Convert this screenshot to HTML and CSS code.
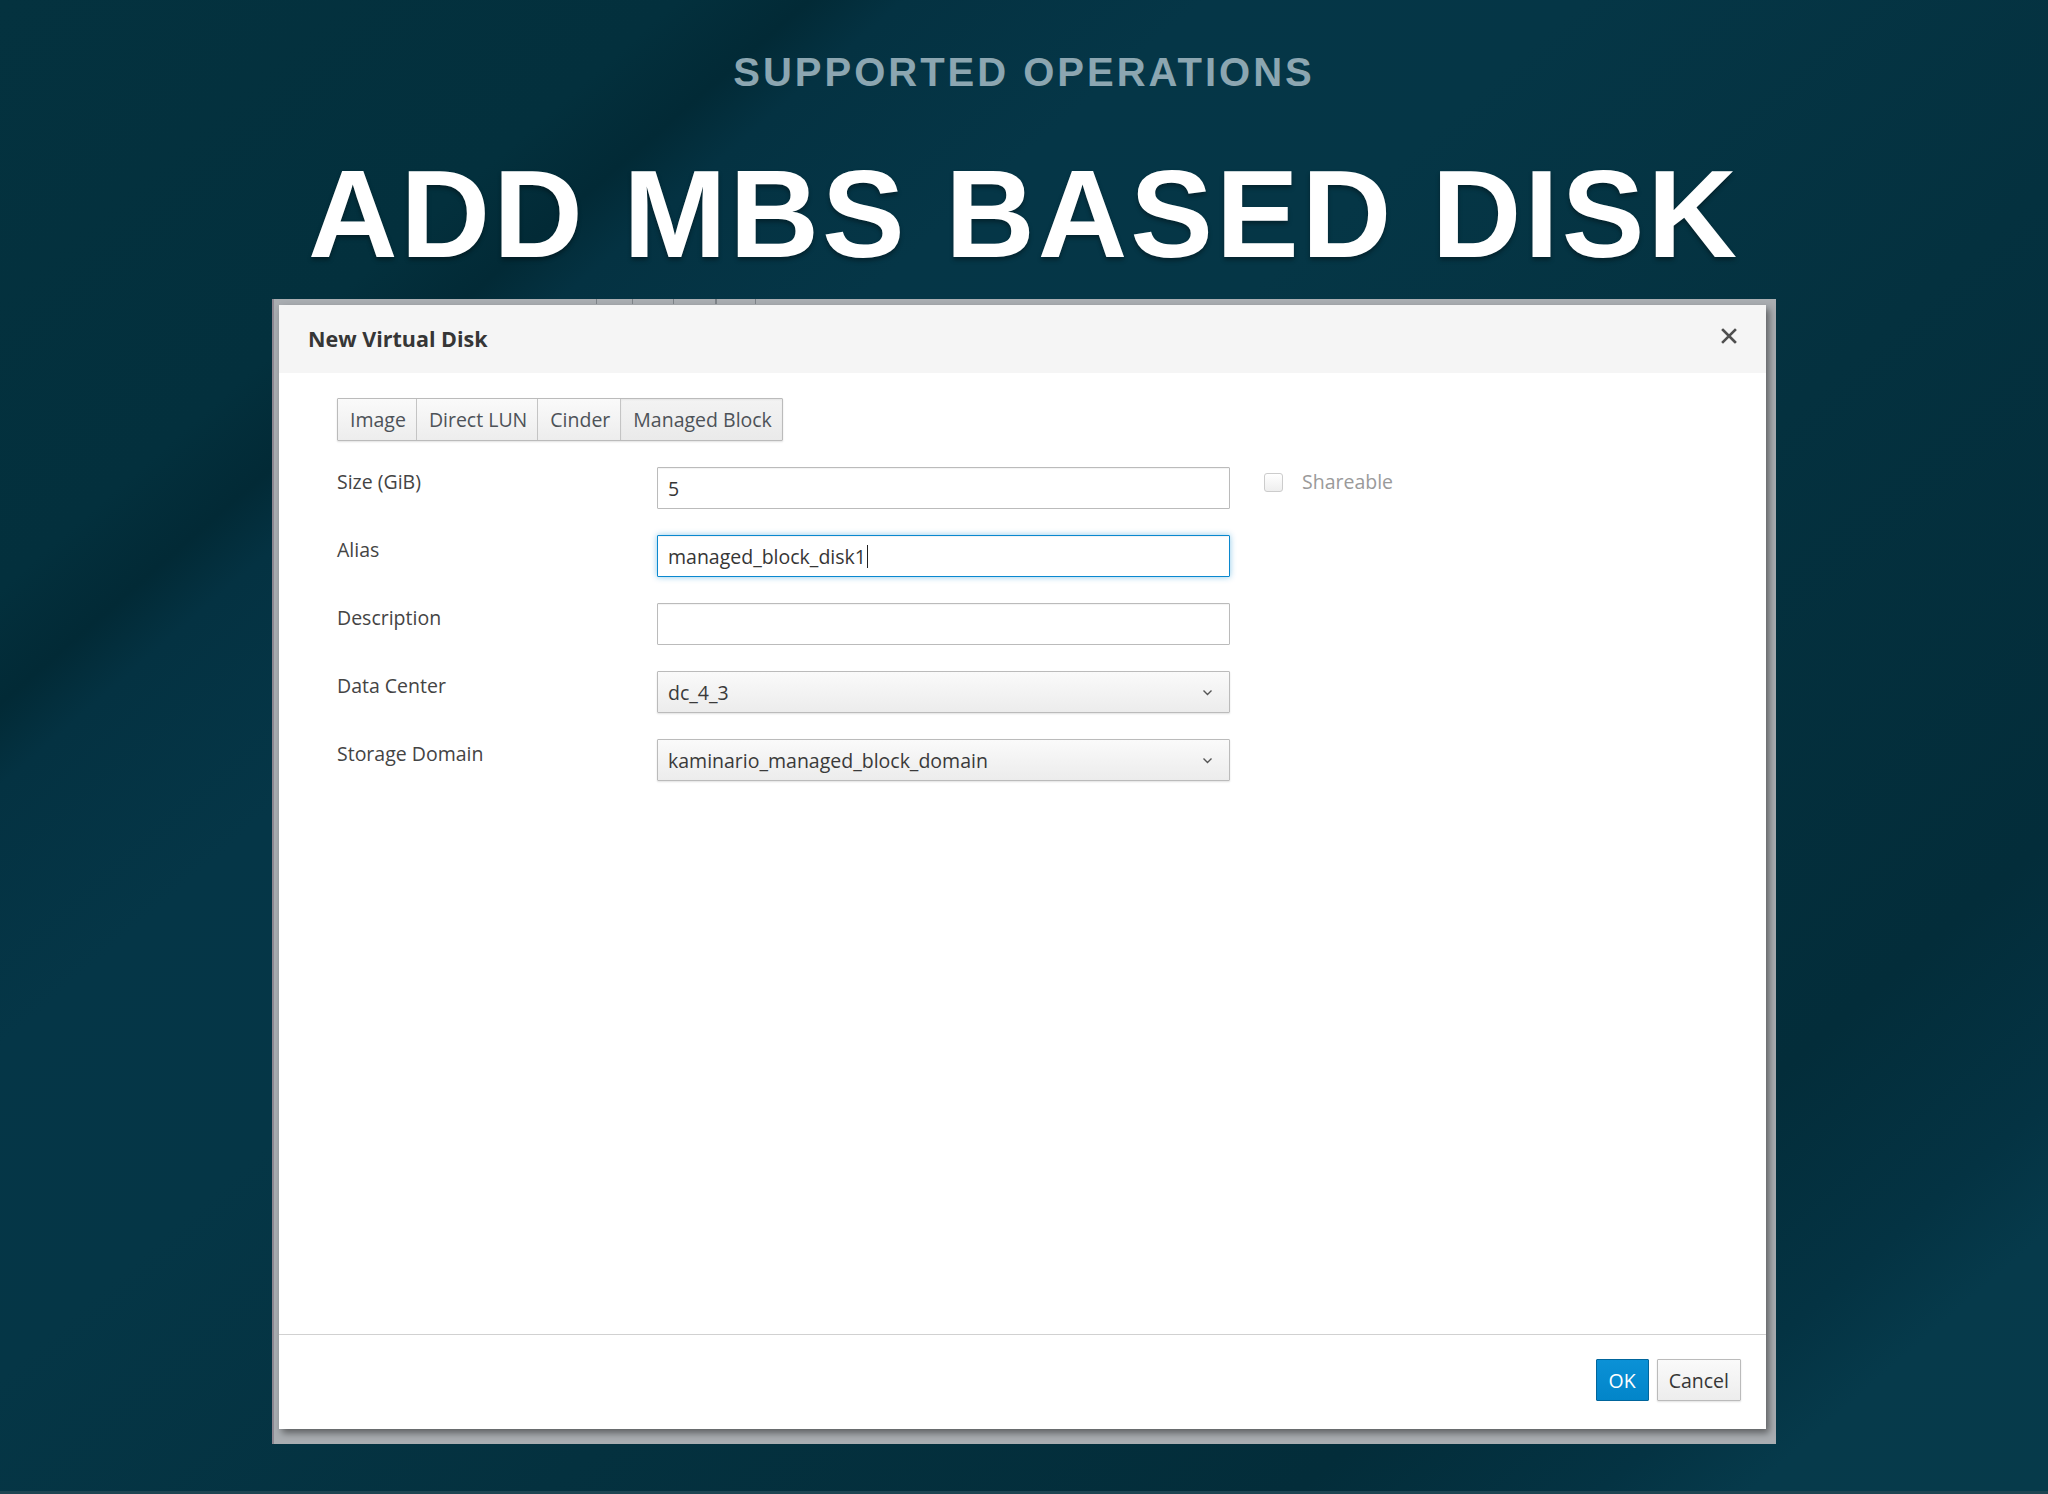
FILE: index.html
```html
<!DOCTYPE html>
<html lang="en">
<head>
<meta charset="utf-8">
<title>Add MBS based disk</title>
<link rel="stylesheet" href="styles.css">
</head>
<body>
<div class="slide">
  <p class="kicker">SUPPORTED OPERATIONS</p>
  <h1 class="headline">ADD MBS BASED DISK</h1>
  <div class="backdrop">
    <div class="modal">
      <div class="modal-header">
        <h4 class="modal-title">New Virtual Disk</h4>
        <span class="close" aria-label="Close">
          <svg width="16" height="16" viewBox="0 0 16 16"><path d="M2 2L14 14M14 2L2 14" stroke="#4f4f4f" stroke-width="2.6" stroke-linecap="square" fill="none"/></svg>
        </span>
      </div>
      <div class="modal-body">
        <div class="tabs">
          <span class="tab">Image</span>
          <span class="tab">Direct LUN</span>
          <span class="tab">Cinder</span>
          <span class="tab active">Managed Block</span>
        </div>
        <div class="form">
          <label class="label">Size (GiB)</label>
          <div class="control">5</div>
          <div class="extra"><span class="checkbox"></span><span class="extra-text">Shareable</span></div>

          <label class="label">Alias</label>
          <div class="control focused">managed_block_disk1<span class="caret"></span></div>
          <div></div>

          <label class="label">Description</label>
          <div class="control"></div>
          <div></div>

          <label class="label">Data Center</label>
          <div class="control select"><span>dc_4_3</span><svg class="chev" width="11" height="7" viewBox="0 0 11 7"><path d="M1.5 1.5l4 4 4-4" stroke="#555" stroke-width="1.4" fill="none"/></svg></div>
          <div></div>

          <label class="label">Storage Domain</label>
          <div class="control select"><span>kaminario_managed_block_domain</span><svg class="chev" width="11" height="7" viewBox="0 0 11 7"><path d="M1.5 1.5l4 4 4-4" stroke="#555" stroke-width="1.4" fill="none"/></svg></div>
          <div></div>
        </div>
      </div>
      <div class="modal-footer">
        <span class="btn btn-primary">OK</span>
        <span class="btn btn-default">Cancel</span>
      </div>
    </div>
  </div>
</div>
</body>
</html>
```
FILE: styles.css
```css
html, body {
  margin: 0;
  padding: 0;
}
body {
  width: 2048px;
  height: 1494px;
  overflow: hidden;
  background:
    linear-gradient(to top, #1d4552 0, #1d4552 3px, transparent 3px),
    linear-gradient(139deg,
      #04323f 0%, #03303d 18%, #022a36 21.5%, #043242 24%, #053647 32%,
      #053646 42%, #04313f 60%, #032d3a 80%, #043343 88%, #063a4b 92%, #063a4a 100%);
  font-family: "Open Sans", "Liberation Sans", sans-serif;
}
.slide {
  display: flex;
  flex-direction: column;
  align-items: center;
  padding-top: 52px;
}
.kicker {
  margin: 0;
  font-family: "Liberation Sans", Arial, sans-serif;
  font-weight: 700;
  font-size: 40px;
  line-height: 40px;
  letter-spacing: 3px;
  color: #8ca6b1;
}
.headline {
  margin: 60px 0 0;
  font-family: "Liberation Sans", Arial, sans-serif;
  font-weight: 700;
  font-size: 124px;
  line-height: 124px;
  letter-spacing: 3px;
  color: #ffffff;
  text-shadow: 0 3px 4px rgba(0, 0, 0, 0.35);
}
.backdrop {
  position: relative;
  margin-top: 23px;
  width: 1504px;
  height: 1145px;
  box-sizing: border-box;
  padding: 6px 10px 15px 5px;
  background: #a9adb1;
  border-left: 2px solid #8c8791;
  display: flex;
}
.backdrop::before {
  content: "";
  position: absolute;
  left: 322px;
  top: 0;
  width: 158px;
  height: 5px;
  border-left: 1px solid #7d8287;
  border-right: 1px solid #7d8287;
  background: linear-gradient(90deg, transparent 22%, #7d8287 22%, #7d8287 23%, transparent 23%, transparent 48%, #7d8287 48%, #7d8287 49%, transparent 49%, transparent 75%, #7d8287 75%, #7d8287 76%, transparent 76%);
}
.modal {
  flex: 1;
  display: flex;
  flex-direction: column;
  background: #ffffff;
  box-shadow: 3px 4px 7px rgba(0, 0, 0, 0.45);
}
.modal-header {
  height: 68px;
  flex: none;
  background: #f5f5f5;
  display: flex;
  align-items: center;
  justify-content: space-between;
  padding: 0 29px 0 29px;
}
.modal-title {
  margin: 0;
  font-size: 21.5px;
  font-weight: 700;
  color: #363636;
  line-height: 28px;
}
.close {
  display: flex;
  width: 16px;
  height: 16px;
  position: relative;
  top: -3px;
}
.modal-body {
  flex: 1;
  padding: 25px 58px 0;
}
.tabs {
  display: inline-flex;
  height: 43px;
  box-sizing: border-box;
  border: 1px solid #bbbbbb;
  border-radius: 1px;
  background: linear-gradient(#fafafa, #ededed);
  box-shadow: 0 1px 2px rgba(0, 0, 0, 0.12);
}
.tab {
  display: flex;
  align-items: center;
  padding: 0 10px 0 12px;
  font-size: 19.5px;
  color: #4d5258;
  border-left: 1px solid #c4c4c4;
}
.tab:first-child {
  border-left: none;
}
.tab.active {
  background: linear-gradient(#f3f3f3, #eaeaea);
  box-shadow: inset 0 1px 2px rgba(0, 0, 0, 0.06);
}
.form {
  margin-top: 26px;
  display: grid;
  grid-template-columns: 320px 573px auto;
  grid-auto-rows: 42px;
  row-gap: 26px;
}
.label {
  padding-top: 1px;
  font-size: 19.5px;
  line-height: 28px;
  color: #444444;
}
.control {
  height: 42px;
  box-sizing: border-box;
  border: 1px solid #bbbbbb;
  border-radius: 1px;
  box-shadow: inset 0 1px 1px rgba(0, 0, 0, 0.05);
  padding: 0 10px;
  display: flex;
  align-items: center;
  font-size: 19.5px;
  color: #363636;
  background: #ffffff;
}
.control.focused {
  border-color: #0a88cf;
  box-shadow: 0 0 6px rgba(0, 136, 206, 0.45), inset 0 1px 1px rgba(0, 0, 0, 0.05);
}
.caret {
  display: inline-block;
  width: 1.5px;
  height: 23px;
  background: #222222;
  margin-left: 1px;
}
.control.select {
  justify-content: space-between;
  background: linear-gradient(#fafafa, #ececec);
  box-shadow: 0 1px 2px rgba(0, 0, 0, 0.12);
  padding-right: 16px;
  color: #3a3a3a;
}
.chev {
  display: block;
}
.extra {
  margin-left: 34px;
  display: flex;
  align-items: flex-start;
}
.checkbox {
  width: 19px;
  height: 19px;
  box-sizing: border-box;
  margin-top: 6px;
  border: 1px solid #cccccc;
  border-radius: 3px;
  background: linear-gradient(#ffffff, #eeeeee);
}
.extra-text {
  margin-left: 19px;
  padding-top: 1px;
  font-size: 19.5px;
  line-height: 28px;
  color: #9a9a9a;
}
.modal-footer {
  flex: none;
  height: 95px;
  box-sizing: border-box;
  border-top: 1px solid #d1d1d1;
  padding: 24px 25px 0;
  display: flex;
  justify-content: flex-end;
  align-items: flex-start;
  gap: 8px;
}
.btn {
  height: 42px;
  box-sizing: border-box;
  display: flex;
  align-items: center;
  padding: 0 11px;
  font-size: 19.5px;
  border-radius: 1px;
  border: 1px solid #bbbbbb;
}
.btn-primary {
  color: #ffffff;
  background: linear-gradient(#0b91d6, #0285c9);
  border-color: #00659c;
  padding: 0 12px;
}
.btn-default {
  color: #363636;
  background: linear-gradient(#fafafa, #ededed);
  box-shadow: 0 1px 2px rgba(0, 0, 0, 0.12);
}
```
